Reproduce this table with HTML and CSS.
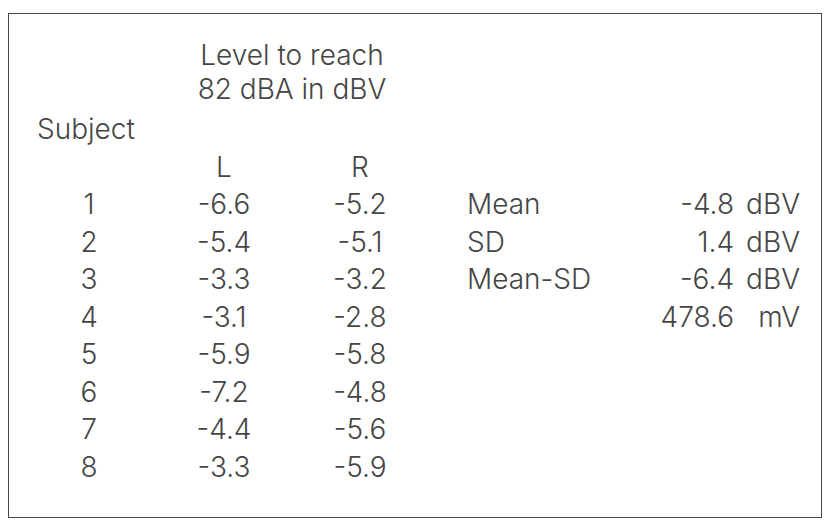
FILE: index.html
```html
<!DOCTYPE html>
<html lang="en">
<head>
<meta charset="utf-8">
<title>Level to reach 82 dBA</title>
<link rel="stylesheet" href="styles.css">
</head>
<body>
<div class="sheet">
  <div class="grid">
    <div class="head">Level to reach<br>82 dBA in dBV</div>

    <div class="subject">Subject</div>

    <div class="c2 ch">L</div>
    <div class="c3 ch">R</div>

    <div class="c1 r">1</div><div class="c2 r">-6.6</div><div class="c3 r">-5.2</div>
    <div class="c4 r">Mean</div><div class="c5 r">-4.8</div><div class="c6 r">dBV</div>

    <div class="c1 r">2</div><div class="c2 r">-5.4</div><div class="c3 r">-5.1</div>
    <div class="c4 r">SD</div><div class="c5 r">1.4</div><div class="c6 r">dBV</div>

    <div class="c1 r">3</div><div class="c2 r">-3.3</div><div class="c3 r">-3.2</div>
    <div class="c4 r">Mean-SD</div><div class="c5 r">-6.4</div><div class="c6 r">dBV</div>

    <div class="c1 r">4</div><div class="c2 r">-3.1</div><div class="c3 r">-2.8</div>
    <div class="c5 r">478.6</div><div class="c6 r">mV</div>

    <div class="c1 r">5</div><div class="c2 r">-5.9</div><div class="c3 r">-5.8</div>
    <div class="c1 r">6</div><div class="c2 r">-7.2</div><div class="c3 r">-4.8</div>
    <div class="c1 r">7</div><div class="c2 r">-4.4</div><div class="c3 r">-5.6</div>
    <div class="c1 r">8</div><div class="c2 r">-3.3</div><div class="c3 r">-5.9</div>
  </div>
</div>
</body>
</html>
```

FILE: styles.css
```css
html, body {
  margin: 0;
  padding: 0;
  background: #ffffff;
}

body {
  font-family: "Inter", "Liberation Sans", sans-serif;
  font-size: 28px;
  font-weight: 300;
  color: #454545;
}

.sheet {
  box-sizing: border-box;
  margin: 13px 0 0 8px;
  width: 814px;
  height: 505px;
  border: 1px solid #454545;
  padding-top: 24px;
}

.grid {
  display: grid;
  grid-template-columns: 147px 136px 136px 212px 94px 66px;
  grid-auto-rows: auto;
}

.head {
  grid-column: 2 / 4;
  text-align: center;
  line-height: 34px;
  margin-bottom: 4px;
}

.subject {
  grid-column: 1 / -1;
  padding-left: 28px;
  line-height: 38px;
}

.ch {
  line-height: 38px;
  text-align: center;
}

.r {
  line-height: 37.5px;
}

.c1 { grid-column: 1; text-align: center; padding-left: 13px; }
.c2 { grid-column: 2; text-align: center; }
.c3 { grid-column: 3; text-align: center; }
.c4 { grid-column: 4; padding-left: 39px; }
.c5 { grid-column: 5; text-align: right; }
.c6 { grid-column: 6; text-align: right; }
```
